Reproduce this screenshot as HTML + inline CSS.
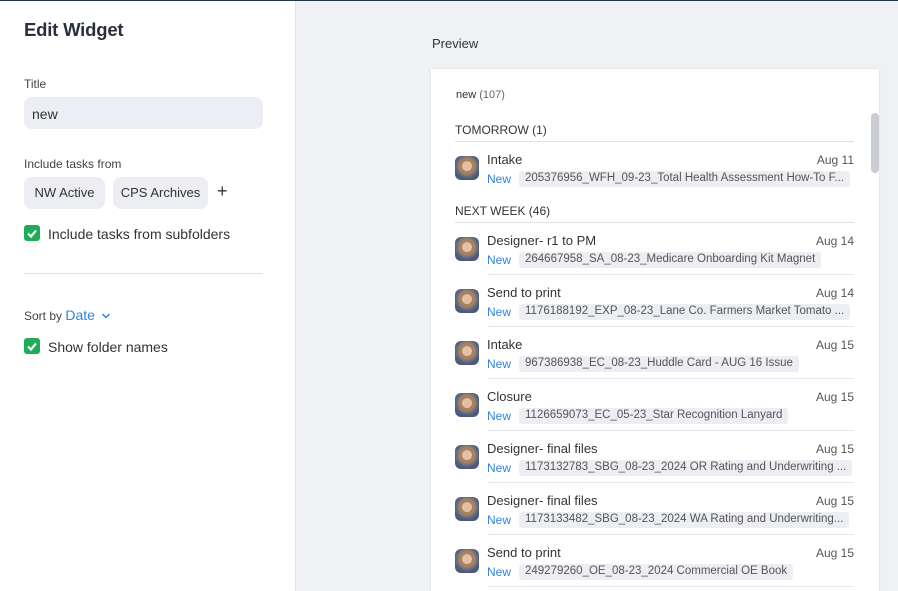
<!DOCTYPE html><html><head><style>
*{margin:0;padding:0;box-sizing:border-box}
html,body{width:898px;height:591px;overflow:hidden}
body{font-family:"Liberation Sans",sans-serif;background:#eff1f5;position:relative;color:#333}
.left{position:absolute;left:0;top:0;width:296px;height:591px;background:#fff;border-right:1px solid #e1e3e8}
.topline{position:absolute;left:0;top:0;width:898px;height:1px;background:#243550;z-index:5}
.abs{position:absolute}
h1{position:absolute;left:24px;top:19px;font-size:18.5px;font-weight:bold;color:#2a2f3d;letter-spacing:-.2px}
.lbl{font-size:12px;color:#444}
.inp{left:24px;top:97px;width:239px;height:32px;background:#eceef3;border-radius:8px;font-size:14px;padding:9px 8px;color:#333}
.chip{height:32px;background:#eceef3;border-radius:8px;font-size:13px;padding:8px 0;text-align:center;color:#333;white-space:nowrap}
.cb{width:16px;height:16px;background:#1eab5a;border-radius:3px}
.cbt{font-size:14px;color:#333}
.card{left:431px;top:69px;width:448px;height:530px;background:#fff;box-shadow:0 0 2px rgba(0,0,0,.12)}
.sec{font-size:12px;color:#333;left:455px}
.hl{left:455px;width:399px;height:1px;background:#dde1ea}
.row{left:455px;width:399px;height:52px}
.av{position:absolute;left:0;top:4px;width:24px;height:24px;border-radius:6px;background:radial-gradient(circle at 50% 42%,#e3bfa5 0 26%,#a7825e 28% 42%,#6a6f86 55%,#4b5a78 70%)}
.t{position:absolute;left:32px;top:0;font-size:13px;color:#333}
.d{position:absolute;right:0;top:1px;font-size:12px;color:#555}
.n{position:absolute;left:32px;top:20px;font-size:12px;color:#2e86de}
.tag{position:absolute;left:64px;top:19px;height:16px;background:#eceef3;border-radius:3px;font-size:11.5px;color:#555;padding:1px 6px;white-space:nowrap;max-width:335px;overflow:hidden;text-overflow:ellipsis}
.sep{position:absolute;left:32px;top:41px;width:367px;height:1px;background:#e6e8ee}
</style></head><body>
<div class="topline"></div>
<div class="left">
<h1>Edit Widget</h1>
<div class="abs lbl" style="left:24px;top:77px">Title</div>
<div class="abs inp">new</div>
<div class="abs lbl" style="left:24px;top:157px">Include tasks from</div>
<div class="abs chip" style="left:24px;top:177px;width:81px">NW Active</div>
<div class="abs chip" style="left:113px;top:177px;width:95px">CPS Archives</div>
<div class="abs" style="left:217px;top:181px;font-size:18px;color:#333">+</div>
<div class="abs cb" style="left:24px;top:225px"><svg width="16" height="16"><path d="M4 8.5l3 3 5-6" stroke="#fff" stroke-width="2.2" fill="none"/></svg></div>
<div class="abs cbt" style="left:48px;top:226px">Include tasks from subfolders</div>
<div class="abs" style="left:24px;top:273px;width:239px;height:1px;background:#dfe1e8"></div>
<div class="abs lbl" style="left:24px;top:307px">Sort by <span style="color:#2e86de;font-size:14px">Date</span> <svg width="10" height="8" style="margin-left:3px"><path d="M1.5 2l3.5 3.5 3.5-3.5" stroke="#2e86de" stroke-width="1.5" fill="none"/></svg></div>
<div class="abs cb" style="left:24px;top:338px"><svg width="16" height="16"><path d="M4 8.5l3 3 5-6" stroke="#fff" stroke-width="2.2" fill="none"/></svg></div>
<div class="abs cbt" style="left:48px;top:339px">Show folder names</div>
</div>
<div class="abs" style="left:432px;top:36px;font-size:13px;color:#333">Preview</div>
<div class="abs card"></div>
<div class="abs" style="left:871px;top:113px;width:8px;height:60px;background:#c9ccd3;border-radius:4px"></div>
<div class="abs" style="left:456px;top:89px;font-size:11px;color:#333">new <span style="color:#666">(107)</span></div>
<div class="abs sec" style="top:123px">TOMORROW (1)</div>
<div class="abs hl" style="top:141px"></div>
<div class="abs row" style="top:152px"><div class="av"></div><div class="t">Intake</div><div class="d">Aug 11</div><div class="n">New</div><div class="tag">205376956_WFH_09-23_Total Health Assessment How-To F...</div></div>
<div class="abs sec" style="top:204px">NEXT WEEK (46)</div>
<div class="abs hl" style="top:222px"></div>
<div class="abs row" style="top:233px"><div class="av"></div><div class="t">Designer- r1 to PM</div><div class="d">Aug 14</div><div class="n">New</div><div class="tag">264667958_SA_08-23_Medicare Onboarding Kit Magnet</div><div class="sep"></div></div>
<div class="abs row" style="top:285px"><div class="av"></div><div class="t">Send to print</div><div class="d">Aug 14</div><div class="n">New</div><div class="tag">1176188192_EXP_08-23_Lane Co. Farmers Market Tomato ...</div><div class="sep"></div></div>
<div class="abs row" style="top:337px"><div class="av"></div><div class="t">Intake</div><div class="d">Aug 15</div><div class="n">New</div><div class="tag">967386938_EC_08-23_Huddle Card - AUG 16 Issue</div><div class="sep"></div></div>
<div class="abs row" style="top:389px"><div class="av"></div><div class="t">Closure</div><div class="d">Aug 15</div><div class="n">New</div><div class="tag">1126659073_EC_05-23_Star Recognition Lanyard</div><div class="sep"></div></div>
<div class="abs row" style="top:441px"><div class="av"></div><div class="t">Designer- final files</div><div class="d">Aug 15</div><div class="n">New</div><div class="tag">1173132783_SBG_08-23_2024 OR Rating and Underwriting ...</div><div class="sep"></div></div>
<div class="abs row" style="top:493px"><div class="av"></div><div class="t">Designer- final files</div><div class="d">Aug 15</div><div class="n">New</div><div class="tag">1173133482_SBG_08-23_2024 WA Rating and Underwriting...</div><div class="sep"></div></div>
<div class="abs row" style="top:545px"><div class="av"></div><div class="t">Send to print</div><div class="d">Aug 15</div><div class="n">New</div><div class="tag">249279260_OE_08-23_2024 Commercial OE Book</div><div class="sep"></div></div>
</body></html>
